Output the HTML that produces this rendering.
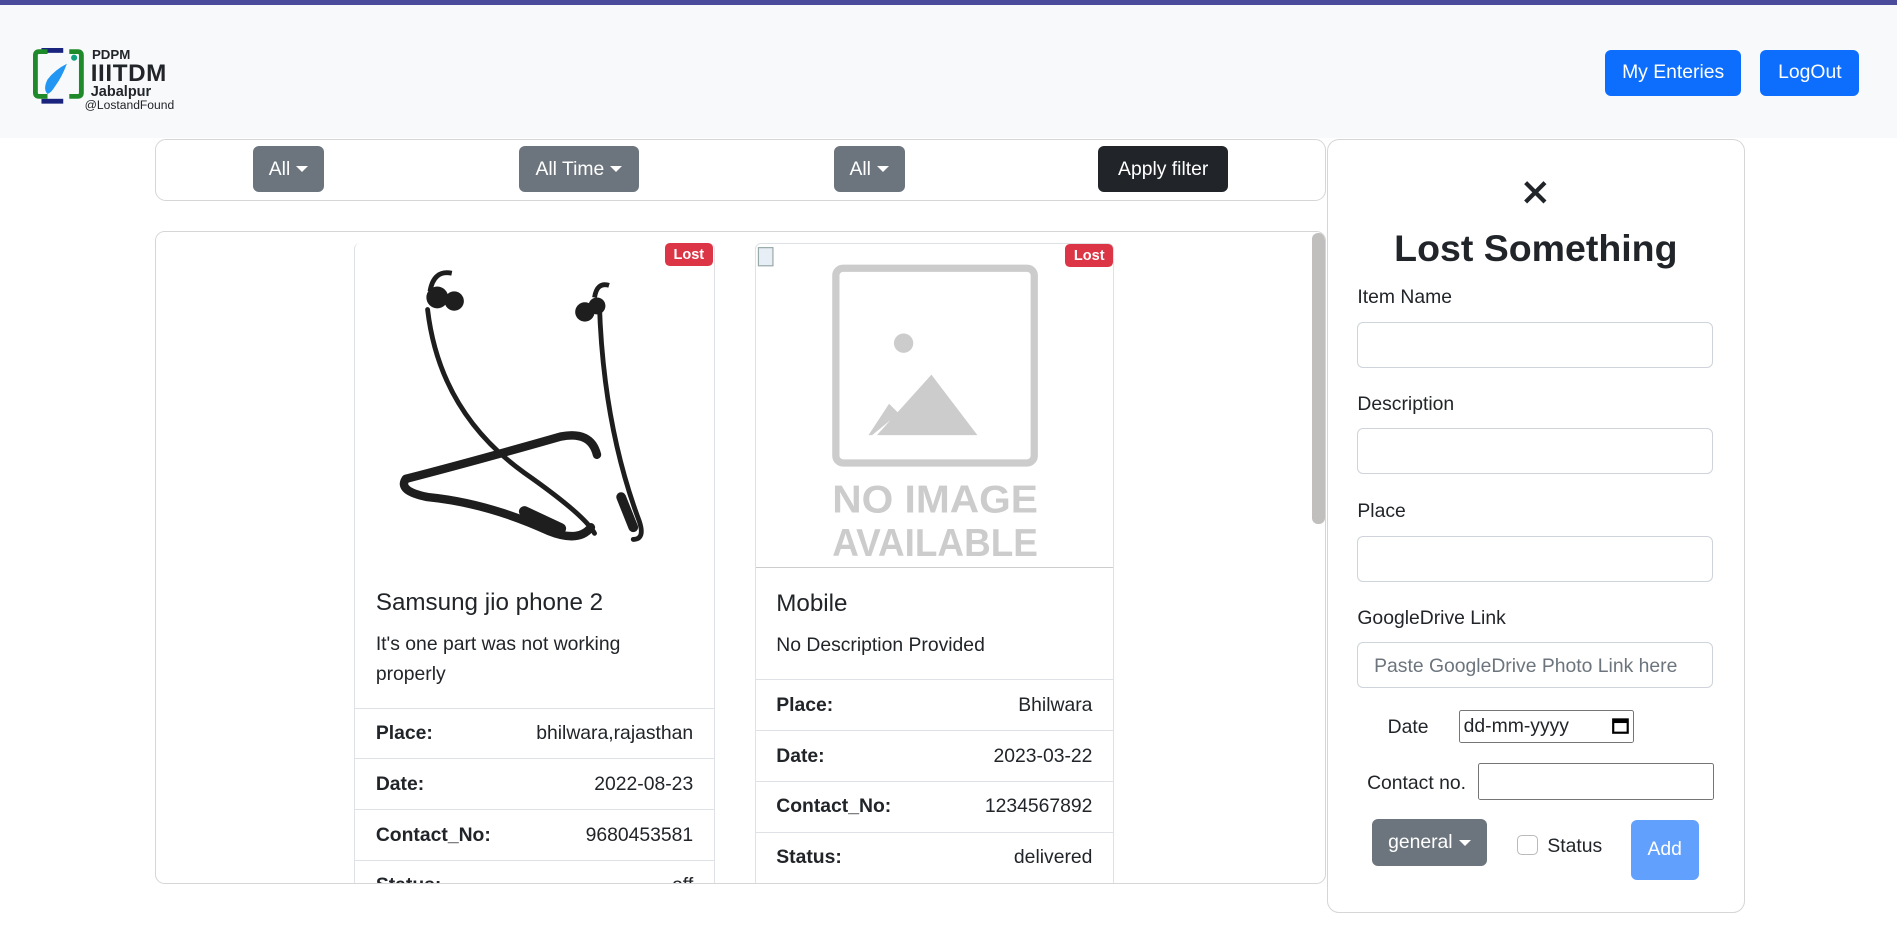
<!DOCTYPE html>
<html><head><meta charset="utf-8">
<style>
*{box-sizing:border-box;margin:0;padding:0}
html,body{width:1897px;height:931px;overflow:hidden;background:#fff}
#w{position:relative;width:1568px;height:770px;zoom:1.2098;font-family:"Liberation Sans","DejaVu Sans",sans-serif;color:#212529;font-size:16px}
.a{position:absolute}
.btn{position:absolute;display:flex;align-items:center;justify-content:center;color:#fff;border-radius:5px;font-size:16px}
.gray{background:#6c757d}
.caret::after{content:"";display:inline-block;margin-left:5px;border-top:5px solid #fff;border-left:5px solid transparent;border-right:5px solid transparent;vertical-align:2px}
.inp{position:absolute;left:1122px;width:294px;height:38px;border:1px solid #ced4da;border-radius:5px;background:#fff}
.lbl{position:absolute;left:1122px;font-size:16px}
.row{position:absolute;left:0;right:0;height:42px;border-top:1px solid #dee2e6;display:flex;justify-content:space-between;align-items:center;padding:0 17px;font-size:16px}
.row b{font-weight:700}
.badge{position:absolute;background:#dc3545;color:#fff;font-size:12px;font-weight:700;border-radius:4px;padding:3px 7px}
</style></head><body><div id="w">
<div class="a" style="left:0;top:0;width:1568px;height:4px;background:#4b4b9b"></div>
<div class="a" style="left:0;top:4px;width:1568px;height:110px;background:#f8f9fa"></div>
<svg class="a" style="left:27px;top:40px" width="44" height="46" viewBox="0 0 44 46">
<rect x="7" y="0" width="18" height="4" fill="#1a237e"/><rect x="7" y="42" width="18" height="4" fill="#1a237e"/>
<path d="M12 3H5Q2 3 2 6V37Q2 40 5 40H12M30 3H37Q40 3 40 6V37Q40 40 37 40H30" fill="none" stroke="#1f8a2a" stroke-width="4"/>
<path d="M12 38Q8 34 12 26Q18 18 28 13Q24 24 18 32Q15 37 12 38Z" fill="#2196f3"/>
<circle cx="34" cy="8" r="2.5" fill="#10a37f"/>
</svg>
<div class="a" style="left:76px;top:40px;font-size:11px;font-weight:700;line-height:12px">PDPM</div>
<div class="a" style="left:75px;top:51px;font-size:20px;font-weight:700;line-height:20px;letter-spacing:0.5px">IIITDM</div>
<div class="a" style="left:75px;top:70px;font-size:12px;font-weight:700;line-height:13px">Jabalpur</div>
<div class="a" style="left:70px;top:82px;font-size:10px;line-height:11px">@LostandFound</div>
<div class="btn" style="left:1327px;top:41px;width:112px;height:38px;background:#0d6efd">My Enteries</div>
<div class="btn" style="left:1455px;top:41px;width:82px;height:38px;background:#0d6efd">LogOut</div>

<div class="a" style="left:128px;top:115px;width:968px;height:51px;border:1px solid #d6d6d6;border-radius:9px"></div>
<div class="btn gray caret" style="left:209px;top:121px;width:59px;height:38px">All</div>
<div class="btn gray caret" style="left:429px;top:121px;width:99px;height:38px">All Time</div>
<div class="btn gray caret" style="left:689px;top:121px;width:59px;height:38px">All</div>
<div class="btn" style="left:908px;top:121px;width:107px;height:38px;background:#212529">Apply filter</div>

<div class="a" style="left:128px;top:191px;width:968px;height:540px;border:1px solid #d6d6d6;border-radius:8px;overflow:hidden">
<div class="a" style="left:956px;top:1px;width:10px;height:240px;background:#c1bebe;border-radius:5px"></div>
<div class="a" style="left:164px;top:9px;width:298px;height:540px;border:1px solid #dee2e6;border-top:none;border-radius:5px;background:#fff">
<svg class="a" style="left:0;top:0" width="296" height="268" viewBox="0 0 296 268">
<g fill="none" stroke="#1e1e1e" stroke-linecap="round">
<path d="M60 55Q70 140 140 190Q190 225 198 240" stroke-width="4"/>
<path d="M202 50Q205 150 235 230Q240 245 230 245" stroke-width="4"/>
<path d="M42 195Q100 180 170 160Q195 155 200 175" stroke-width="7"/>
<path d="M42 195Q35 205 60 210Q110 215 160 238Q185 248 195 235" stroke-width="7"/>
<path d="M140 222L170 236" stroke-width="9"/>
<path d="M220 210L230 235" stroke-width="8"/>
</g>
<circle cx="68" cy="45" r="9" fill="#1e1e1e"/><circle cx="82" cy="48" r="8" fill="#1e1e1e"/>
<path d="M62 40Q65 22 80 25" stroke="#1e1e1e" stroke-width="4" fill="none"/>
<circle cx="190" cy="57" r="8" fill="#1e1e1e"/><circle cx="200" cy="52" r="7" fill="#1e1e1e"/>
<path d="M198 45Q200 32 210 35" stroke="#1e1e1e" stroke-width="4" fill="none"/>
</svg>
<div class="badge" style="right:1px;top:0">Lost</div>
<div class="a" style="left:17px;top:286px;font-size:20px">Samsung jio phone 2</div>
<div class="a" style="left:17px;top:319px;width:260px;line-height:25px">It's one part was not working properly</div>
<div class="row" style="top:384px"><b>Place:</b><span>bhilwara,rajasthan</span></div>
<div class="row" style="top:426px"><b>Date:</b><span>2022-08-23</span></div>
<div class="row" style="top:468px"><b>Contact_No:</b><span>9680453581</span></div>
<div class="row" style="top:510px"><b>Status:</b><span>off</span></div>
</div>
<div class="a" style="left:495px;top:9px;width:297px;height:540px;border:1px solid #dee2e6;border-radius:5px;background:#fff">
<div class="a" style="left:0;top:0;width:295px;height:268px;border-bottom:1px solid #ccc"></div>
<svg class="a" style="left:0;top:0" width="295" height="268" viewBox="0 0 295 268">
<rect x="2" y="3" width="12" height="15" fill="#e8eef5" stroke="#9aa"/>
<rect x="66" y="20" width="164" height="161" rx="6" fill="none" stroke="#ccc" stroke-width="6"/>
<circle cx="122" cy="82" r="8" fill="#ccc"/>
<path d="M93 158L110 132L118 140L96 158Z M100 158L145 108L183 158Z" fill="#ccc"/>
<text x="63" y="222" textLength="170" lengthAdjust="spacingAndGlyphs" font-family="Liberation Sans,sans-serif" font-weight="700" font-size="32" fill="#ccc">NO IMAGE</text>
<text x="63" y="258" textLength="170" lengthAdjust="spacingAndGlyphs" font-family="Liberation Sans,sans-serif" font-weight="700" font-size="32" fill="#ccc">AVAILABLE</text>
</svg>
<div class="badge" style="right:0;top:0">Lost</div>
<div class="a" style="left:17px;top:286px;font-size:20px">Mobile</div>
<div class="a" style="left:17px;top:319px;line-height:25px">No Description Provided</div>
<div class="row" style="top:360px"><b>Place:</b><span>Bhilwara</span></div>
<div class="row" style="top:402px"><b>Date:</b><span>2023-03-22</span></div>
<div class="row" style="top:444px"><b>Contact_No:</b><span>1234567892</span></div>
<div class="row" style="top:486px"><b>Status:</b><span>delivered</span></div>
</div>
</div>

<div class="a" style="left:1097px;top:115px;width:345px;height:640px;border:1px solid #d6d6d6;border-radius:10px;background:#fff"></div>
<svg class="a" style="left:1258px;top:148px" width="22" height="22" viewBox="0 0 22 22"><path d="M3 3L19 19M19 3L3 19" stroke="#212529" stroke-width="3.5"/></svg>
<div class="a" style="left:1097px;top:188px;width:345px;text-align:center;font-size:31px;font-weight:700">Lost Something</div>
<div class="lbl" style="top:236px">Item Name</div><div class="inp" style="top:266px"></div>
<div class="lbl" style="top:325px">Description</div><div class="inp" style="top:354px"></div>
<div class="lbl" style="top:413px">Place</div><div class="inp" style="top:443px"></div>
<div class="lbl" style="top:502px">GoogleDrive Link</div>
<div class="inp" style="top:531px;color:#6c757d;padding:10px 0 0 13px;font-size:16px">Paste GoogleDrive Photo Link here</div>
<div class="a" style="left:1147px;top:592px">Date</div>
<div class="a" style="left:1206px;top:587px;width:145px;height:27px;border:1px solid #767676;border-radius:2px;padding:3px 0 0 3px;font-size:16px">dd-mm-yyyy
<svg class="a" style="left:126px;top:5px" width="14" height="14" viewBox="0 0 14 14"><rect x="1" y="2" width="12" height="11" fill="none" stroke="#000" stroke-width="1.8"/><rect x="1" y="2" width="12" height="3" fill="#000"/></svg></div>
<div class="a" style="left:1130px;top:638px">Contact no.</div>
<div class="a" style="left:1222px;top:631px;width:195px;height:30px;border:1px solid #767676;border-radius:2px"></div>
<div class="btn gray caret" style="left:1134px;top:677px;width:95px;height:39px">general</div>
<div class="a" style="left:1254px;top:690px;width:17px;height:17px;border:1px solid #bbb;border-radius:4px"></div>
<div class="a" style="left:1279px;top:690px">Status</div>
<div class="btn" style="left:1348px;top:678px;width:56px;height:49px;background:#62a0fd">Add</div>
</div></body></html>
